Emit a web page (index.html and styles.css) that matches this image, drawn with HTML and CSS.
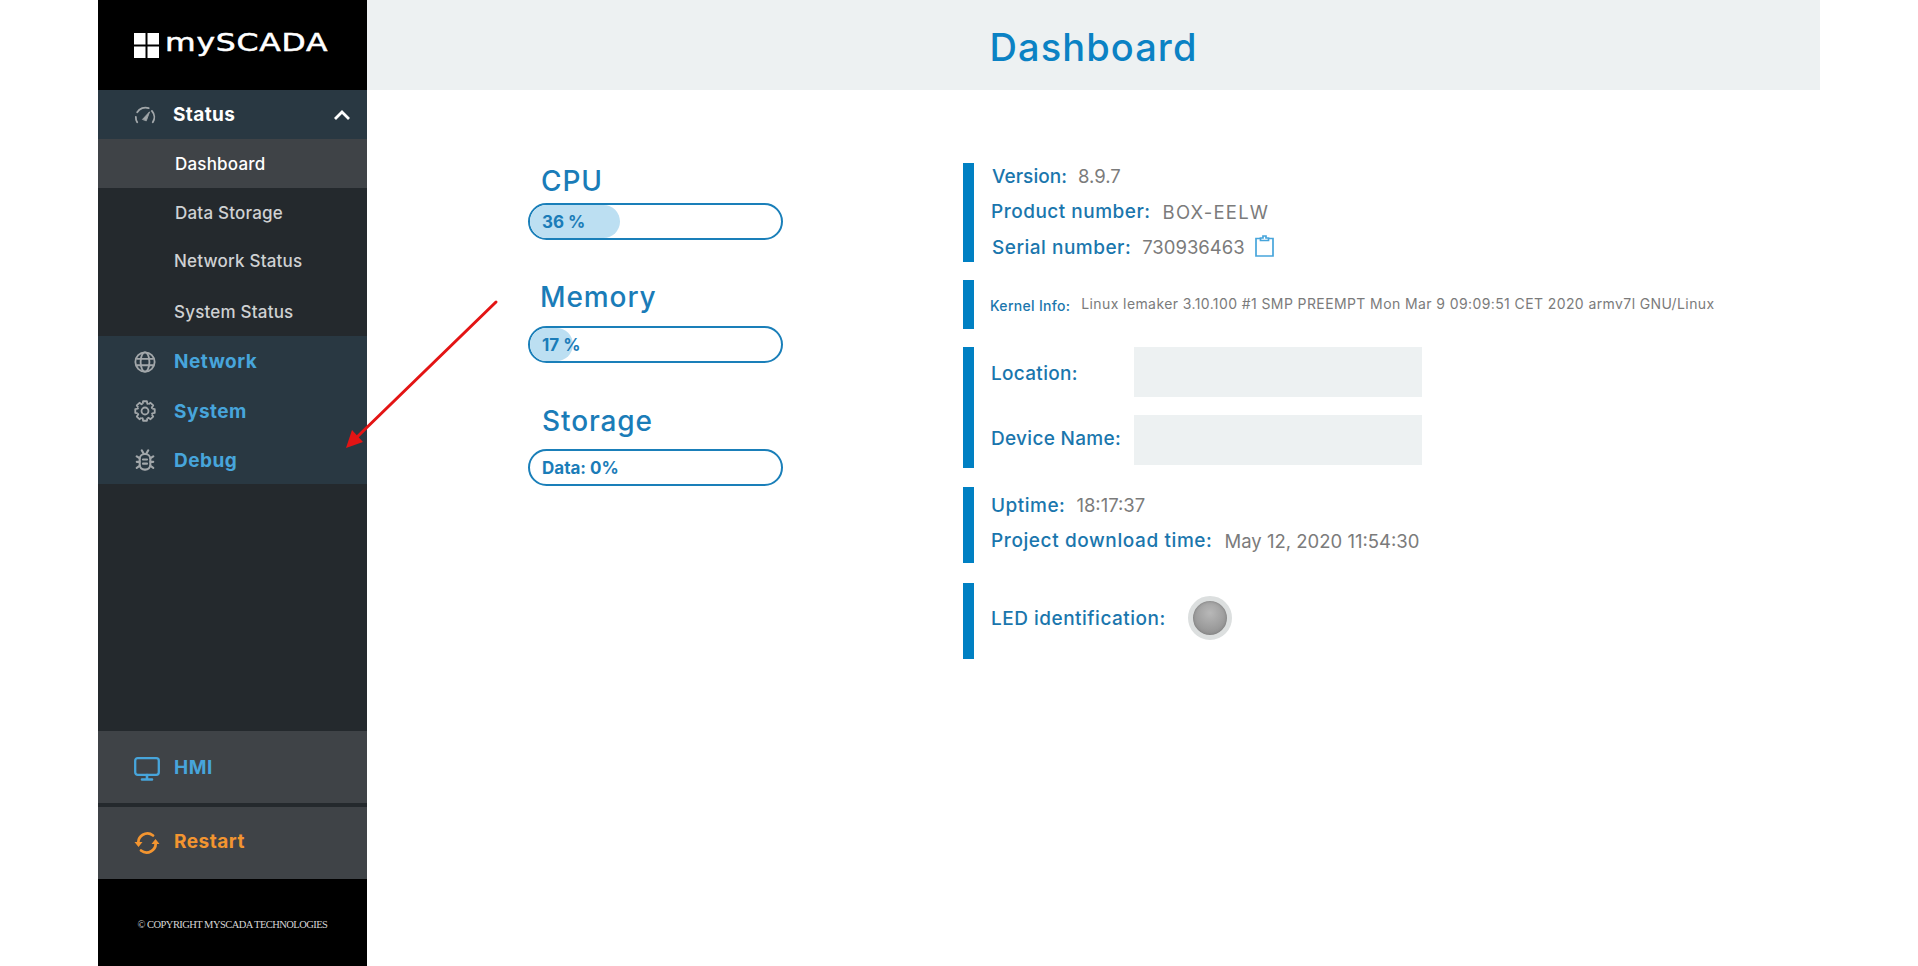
FILE: index.html
```html
<!DOCTYPE html>
<html lang="en">
<head>
<meta charset="utf-8">
<title>mySCADA Dashboard</title>
<link rel="stylesheet" href="styles.css">
</head>
<body>
<div class="app">
  <aside class="sidebar">
    <div class="logo">
      <svg class="logo-mark" viewBox="0 0 25 25"><path fill="#fff" d="M0 0h11.5v11.5H0zM13.5 0H25v11.5H13.5zM0 13.5h11.5V25H0zM13.5 13.5H25V25H13.500z"/></svg>
      <span class="logo-text">mySCADA</span>
    </div>
    <div class="nav-head">
      <svg class="ico" viewBox="0 0 24 24" fill="none" stroke="#a2a7aa" stroke-width="2" stroke-linecap="round"><path d="M3.500 20A10.500 10.500 0 0 1 2 14M3.500 9A10.500 10.500 0 0 1 16 4.500M19.500 7.500A10.500 10.500 0 0 1 20.500 20"/><path d="M9.500 16.500L17 8.500L13.500 18z" fill="#a2a7aa" stroke-width="1"/></svg>
      <span class="nav-label">Status</span>
      <svg class="chev" viewBox="0 0 18 12" fill="none" stroke="#fff" stroke-width="2.800"><path d="M2 10l7-7 7 7"/></svg>
    </div>
    <div class="sub">
      <div class="sub-item active">Dashboard</div>
      <div class="sub-item">Data Storage</div>
      <div class="sub-item">Network Status</div>
      <div class="sub-item">System Status</div>
    </div>
    <div class="nav-group">
      <div class="nav-row">
        <svg class="ico" viewBox="0 0 24 24" fill="none" stroke="#a2a7aa" stroke-width="2"><circle cx="12" cy="12" r="10.500"/><ellipse cx="12" cy="12" rx="4.800" ry="10.500"/><path d="M2.500 8.500h19M2.500 15.500h19"/></svg>
        <span class="nav-label link">Network</span>
      </div>
      <div class="nav-row">
        <svg class="ico" viewBox="0 0 24 24" fill="none" stroke="#a2a7aa" stroke-width="2" stroke-linejoin="round">
          <defs><path id="tooth" d="M19.400 15.780L19.900 14.560L22.600 14.060V9.940L19.900 9.440"/></defs>
          <use href="#tooth"/>
          <use href="#tooth" transform="rotate(45 12 12)"/>
          <use href="#tooth" transform="rotate(90 12 12)"/>
          <use href="#tooth" transform="rotate(135 12 12)"/>
          <use href="#tooth" transform="rotate(180 12 12)"/>
          <use href="#tooth" transform="rotate(225 12 12)"/>
          <use href="#tooth" transform="rotate(270 12 12)"/>
          <use href="#tooth" transform="rotate(315 12 12)"/>
          <circle cx="12" cy="12" r="3.800"/>
        </svg>
        <span class="nav-label link">System</span>
      </div>
      <div class="nav-row">
        <svg class="ico" viewBox="0 0 24 24" fill="none" stroke="#a2a7aa" stroke-width="2.300" stroke-linecap="round"><rect x="6.200" y="5.500" width="11.600" height="17" rx="5.500"/><path d="M9.800 11.500h4.400M9.800 16h4.400M8.500 1.500l2 3.500M15.500 1.500l-2 3.500M3 8l3 2M21 8l-3 2M3 14h3M21 14h-3M3 20.500l3-2M21 20.500l-3-2"/></svg>
        <span class="nav-label link">Debug</span>
      </div>
    </div>
    <div class="spacer"></div>
    <div class="bottom-row hmi">
      <svg class="ico-lg" viewBox="0 0 26 24" fill="none" stroke="#47a5db" stroke-width="2.300" stroke-linecap="round" stroke-linejoin="round"><rect x="1.200" y="1.200" width="23.600" height="16.600" rx="2.500"/><path d="M13 18v4M8 22.500h10" stroke-width="2.600"/></svg>
      <span class="nav-label link">HMI</span>
    </div>
    <div class="bottom-row restart">
      <svg class="ico-lg" viewBox="0 0 26 24" fill="none" stroke="#f39530" stroke-width="2.700" stroke-linecap="round"><path d="M4.500 13A9 9 0 0 1 19 4.500"/><path d="M21.500 11A9 9 0 0 1 7 19.500"/><path fill="#f39530" stroke="none" d="M0.500 11h8l-4 5zM17.500 13h8l-4-5z"/></svg>
      <span class="nav-label orange">Restart</span>
    </div>
    <div class="copyright">© COPYRIGHT MYSCADA TECHNOLOGIES</div>
  </aside>
  <main class="main">
    <header class="page-head"><h1>Dashboard</h1></header>
    <div class="content">
      <section class="meters">
        <div class="meter">
          <h2 class="meter-title t-cpu">CPU</h2>
          <div class="bar"><div class="fill" style="width:36%"></div><span class="bar-text">36 %</span></div>
        </div>
        <div class="meter">
          <h2 class="meter-title t-mem">Memory</h2>
          <div class="bar"><div class="fill" style="width:17%"></div><span class="bar-text">17 %</span></div>
        </div>
        <div class="meter">
          <h2 class="meter-title t-sto">Storage</h2>
          <div class="bar"><span class="bar-text">Data: 0%</span></div>
        </div>
      </section>
      <section class="info">
        <div class="block b1">
          <div class="line"><span class="lab nudge tight">Version:</span><span class="val">8.9.7</span></div>
          <div class="line"><span class="lab">Product number:</span><span class="val caps">BOX-EELW</span></div>
          <div class="line"><span class="lab nudge">Serial number:</span><span class="val">730936463</span>
            <svg class="clip" viewBox="0 0 19 22" fill="none" stroke="#47a5db" stroke-width="1.700"><path d="M5 3.500H1v17.500h17V3.500h-4"/><path d="M5.500 5.500V3h2.500V1h3v2h2.500v2.500z"/></svg>
          </div>
        </div>
        <div class="block b2">
          <span class="lab small">Kernel Info:</span><span class="val small">Linux lemaker 3.10.100 #1 SMP PREEMPT Mon Mar 9 09:09:51 CET 2020 armv7l GNU/Linux</span>
        </div>
        <div class="block b3">
          <div class="field"><span class="lab field-lab">Location:</span><div class="input"></div></div>
          <div class="field"><span class="lab field-lab">Device Name:</span><div class="input"></div></div>
        </div>
        <div class="block b4">
          <div class="line"><span class="lab">Uptime:</span><span class="val">18:17:37</span></div>
          <div class="line"><span class="lab wide">Project download time:</span><span class="val">May 12, 2020 11:54:30</span></div>
        </div>
        <div class="block b5">
          <span class="lab">LED identification:</span><span class="led"></span>
        </div>
      </section>
    </div>
  </main>
  <svg class="arrow" viewBox="0 0 160 155" width="160" height="155"><path d="M152 3 L12 139" stroke="#e31414" stroke-width="3" fill="none" stroke-linecap="round"/><path d="M2 149 L8 131 L19 143z" fill="#e31414"/></svg>
</div>
</body>
</html>
```
FILE: styles.css
```css
* { box-sizing: border-box; }
html, body { margin: 0; padding: 0; background: #fff; }
body { font-family: Inter, "Open Sans", sans-serif; }
.app { position: relative; display: flex; width: 1918px; height: 966px; padding: 0 98px; overflow: hidden; }

.sidebar { width: 269px; flex: none; display: flex; flex-direction: column; background: #24292d; }
.logo { height: 90px; flex: none; background: #000; display: flex; align-items: center; padding-left: 36px; gap: 6px; }
.logo-mark { width: 25px; height: 25px; flex: none; }
.logo-text { font-family: "DejaVu Sans", sans-serif; font-size: 24px; font-weight: 400; color: #fff; letter-spacing: .6px; -webkit-text-stroke: .5px #fff; transform: scaleX(1.31); transform-origin: left center; margin-bottom: 4px; }
.nav-head { height: 49px; flex: none; background: #293842; display: flex; align-items: center; padding-left: 36px; }
.ico { width: 22px; height: 22px; flex: none; margin-right: 17px; }
.nav-label { font-size: 19px; font-weight: 700; color: #fff; letter-spacing: .4px; }
.nav-label.link { color: #47a5db; letter-spacing: .5px; }
.nav-label.orange { color: #f39530; letter-spacing: .5px; }
.chev { width: 18px; height: 12px; margin-left: auto; margin-right: 16px; }
.sub { flex: none; height: 197px; display: flex; flex-direction: column; }
.sub-item { height: 49.250px; padding-left: 76px; display: flex; align-items: center; font-size: 17px; font-weight: 500; letter-spacing: .2px; color: #cfd1d3; }
.sub-item:nth-child(-n+2) { padding-left: 77px; }
.sub-item:nth-child(3) { padding-bottom: 2px; }
.sub-item:nth-child(4) { padding-top: 2px; }
.sub-item.active { background: #3f4347; color: #fff; }
.nav-group { flex: none; height: 148px; background: #293842; display: flex; flex-direction: column; }
.nav-row { height: 49.300px; flex: none; display: flex; align-items: center; padding: 2px 0 0 36px; }
.nav-row:nth-child(2) { padding-top: 3px; }
.nav-row .ico { margin-right: 18px; }
.spacer { flex: 1; }
.bottom-row { height: 72px; flex: none; background: #3f4347; display: flex; align-items: center; padding-left: 36px; }
.bottom-row .nav-label { margin-left: 14px; }
.hmi { margin-bottom: 4px; }
.hmi .nav-label { margin-top: 1px; }
.hmi .ico-lg { margin-top: 4px; }
.restart .nav-label { margin-top: -3px; }
.ico-lg { width: 26px; height: 24px; flex: none; }
.copyright { height: 87px; flex: none; background: #000; display: flex; align-items: center; justify-content: center; padding-top: 4px; font-family: "Liberation Serif", serif; font-size: 10.500px; letter-spacing: -.55px; color: #d6d6d6; }

.main { flex: 1; min-width: 0; }
.page-head { height: 90px; background: #edf1f2; display: flex; align-items: center; justify-content: center; padding-top: 3px; }
.page-head h1 { margin: 0; font-size: 38px; font-weight: 500; letter-spacing: 1.100px; color: #0b82c4; }
.content { display: flex; }
.meters { width: 596px; flex: none; padding: 73px 0 0 161px; }
.meter { width: 255px; height: 123px; display: flex; flex-direction: column; justify-content: flex-end; }
.meter:nth-child(1) { height: 77px; }
.meter-title { margin: 0 0 6px; font-size: 28px; line-height: 34px; font-weight: 500; letter-spacing: .9px; color: #1a7cb8; flex: none; }
.t-cpu { padding-left: 13px; margin-bottom: 5px; }
.t-mem { padding-left: 12px; margin-bottom: 12px; }
.t-sto { padding-left: 14px; margin-bottom: 11px; }
.bar { position: relative; flex: none; height: 37px; border: 2.500px solid #1a7fb9; border-radius: 19px; overflow: hidden; display: flex; align-items: center; padding-left: 12px; }
.fill { position: absolute; left: 0; top: 0; bottom: 0; background: #bcdff2; border-radius: 0 19px 19px 0; }
.bar-text { position: relative; font-size: 17px; font-weight: 700; color: #1a7cb8; }

.info { padding-top: 73px; flex: 1; min-width: 0; }
.block { border-left: 11px solid #0080c3; padding-left: 17px; }
.b1 { height: 99px; display: flex; flex-direction: column; gap: 9.500px; }
.b2 { height: 49px; margin-top: 18px; display: flex; align-items: center; padding-left: 16px; }
.b3 { height: 121px; margin-top: 18px; display: flex; flex-direction: column; }
.b4 { height: 76px; margin-top: 19px; display: flex; flex-direction: column; gap: 9.500px; padding-top: 5px; }
.b5 { height: 76px; margin-top: 20px; display: flex; align-items: center; padding-bottom: 6px; }
.line { height: 26px; flex: none; display: flex; align-items: center; }
.lab { font-size: 19px; font-weight: 500; letter-spacing: .5px; color: #1a76ad; white-space: nowrap; }
.lab.nudge { margin-left: 1px; }
.lab.tight { letter-spacing: .05px; }
.lab.wide { letter-spacing: .6px; }
.val { font-size: 18.500px; font-weight: 400; color: #7b7b7b; margin-left: 11px; white-space: nowrap; }
.lab.wide + .val { margin-left: 12px; }
.val.caps { letter-spacing: 1.200px; margin-left: 12px; }
.lab.small { font-size: 14px; letter-spacing: .3px; margin-top: 1px; }
.val.small { font-size: 14px; letter-spacing: .4px; margin-left: 11px; margin-top: -2px; }
.clip { width: 19px; height: 22px; margin-left: 10px; flex: none; margin-top: -2px; }
.field { height: 50px; display: flex; align-items: center; }
.field + .field { margin-top: 18px; }
.field-lab { width: 143px; flex: none; margin-top: 2px; letter-spacing: .3px; }
.field + .field .field-lab { margin-top: -4px; }
.input { width: 288px; height: 50px; background: #edf1f2; }
.led { width: 44px; height: 44px; margin-left: 22px; border-radius: 50%; border: 5px solid #dcdfdf; background: radial-gradient(circle at 50% 35%, #b8b8b8, #939393 75%); box-shadow: inset 0 0 3px #777; flex: none; }

.arrow { position: absolute; left: 344px; top: 299px; }
```
